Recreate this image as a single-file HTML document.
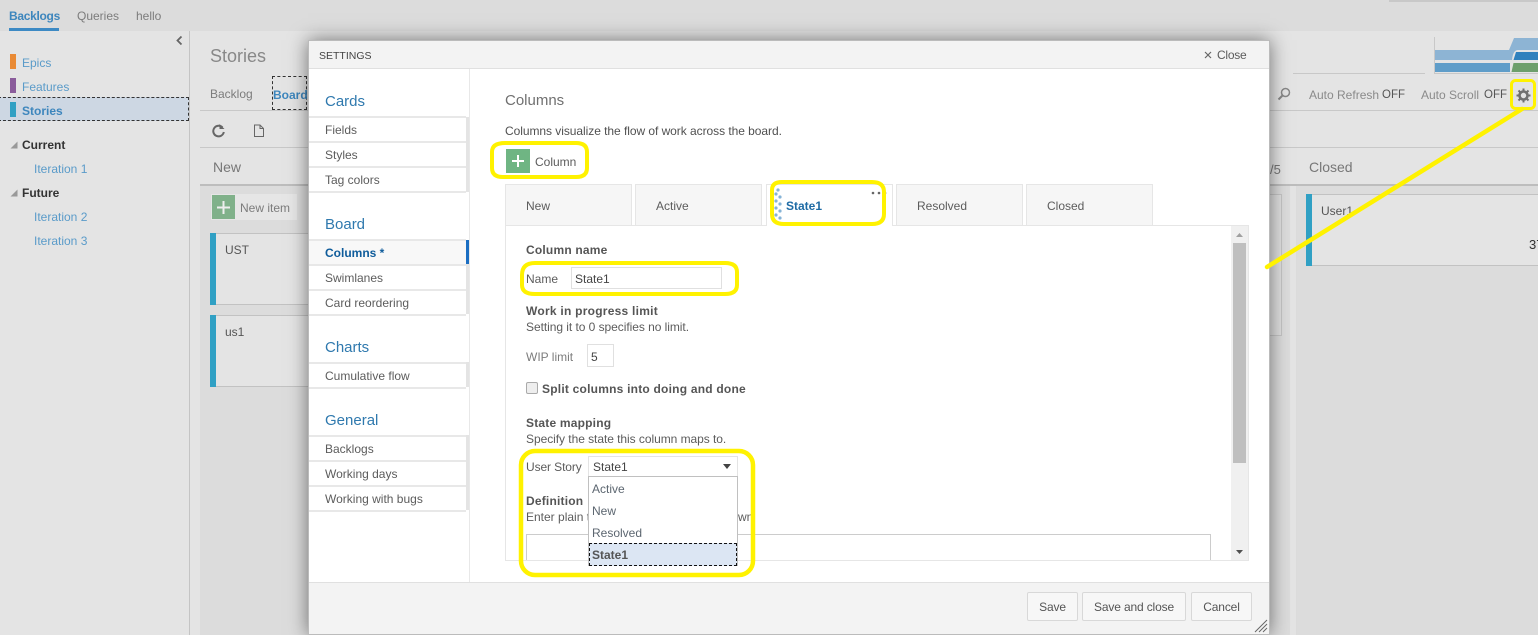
<!DOCTYPE html>
<html><head><meta charset="utf-8"><style>
html,body{margin:0;padding:0;width:1538px;height:635px;overflow:hidden;background:#e4e4e4;font-family:"Liberation Sans",sans-serif;font-size:12px;color:#444}
.a{position:absolute}
.t{position:absolute;white-space:nowrap;line-height:16px}
.bl{color:#5a9bc9}
.ln{position:absolute;background:#e8e8e8;height:2px}
.g{color:#7c7c7c}
.h{font-size:15px;color:#2f79ae;line-height:20px;margin-top:1px}
.sb{color:#5c5c5c;font-size:12px}
.b{font-weight:bold;color:#555;letter-spacing:.2px}
.btn{position:absolute;top:592px;height:29px;background:#f7f7f7;border:1px solid #d8d8d8;border-radius:2px;box-sizing:border-box;text-align:center;line-height:28px;color:#555;letter-spacing:-.15px}
.tab{position:absolute;top:184px;height:42px;background:#f6f6f6;border:1px solid #e6e6e6;border-bottom:none;box-sizing:border-box;line-height:42px;color:#5c5c5c}
</style></head><body>
<!-- background -->
<div class="a" style="left:0;top:0;width:1538px;height:31px;background:#dcdcdc"></div>
<div class="a" style="left:1389px;top:0;width:149px;height:2px;background:#c8c8c8"></div>
<div class="t" style="left:9px;top:8px;font-weight:bold;color:#3d86bd;letter-spacing:-.3px">Backlogs</div>
<div class="a" style="left:9px;top:28px;width:50px;height:3px;background:#3d8ac4"></div>
<div class="t g" style="left:77px;top:8px">Queries</div>
<div class="t g" style="left:136px;top:8px">hello</div>
<div class="a" style="left:189px;top:31px;width:1px;height:604px;background:#c4c4c4"></div>
<svg class="a" style="left:175px;top:35px" width="10" height="12"><path d="M6.500 1.500L2.500 5.500L6.500 9.500" fill="none" stroke="#666" stroke-width="1.800"/></svg>
<div class="a" style="left:10px;top:54px;width:6px;height:15px;background:#e98a35"></div>
<div class="t bl" style="left:22px;top:55px">Epics</div>
<div class="a" style="left:10px;top:78px;width:6px;height:15px;background:#8a5c9b"></div>
<div class="t bl" style="left:22px;top:79px">Features</div>
<div class="a" style="left:-2px;top:97px;width:191px;height:24px;background:#cdd7e3;border:1px dashed #333;box-sizing:border-box"></div>
<div class="a" style="left:10px;top:102px;width:6px;height:15px;background:#30a0c4"></div>
<div class="t" style="left:22px;top:103px;font-weight:bold;color:#3d86bd">Stories</div>
<svg class="a" style="left:10px;top:141px" width="8" height="8"><path d="M7.500 .5V7.500H.5Z" fill="#999"/></svg>
<div class="t" style="left:22px;top:137px;font-weight:bold;color:#333">Current</div>
<div class="t bl" style="left:34px;top:161px">Iteration 1</div>
<svg class="a" style="left:10px;top:189px" width="8" height="8"><path d="M7.500 .5V7.500H.5Z" fill="#999"/></svg>
<div class="t" style="left:22px;top:185px;font-weight:bold;color:#333">Future</div>
<div class="t bl" style="left:34px;top:209px">Iteration 2</div>
<div class="t bl" style="left:34px;top:233px">Iteration 3</div>

<div class="t" style="left:210px;top:46px;font-size:18px;line-height:20px;color:#888">Stories</div>
<div class="t g" style="left:210px;top:86px">Backlog</div>
<div class="a" style="left:272px;top:76px;width:35px;height:34px;border:1px dashed #333;box-sizing:border-box"></div>
<div class="t" style="left:273px;top:87px;font-weight:bold;color:#3d86bd">Board</div>
<div class="a" style="left:200px;top:110px;width:1338px;height:1px;background:#c8c8c8"></div>
<div class="a" style="left:200px;top:147px;width:1338px;height:1px;background:#c8c8c8"></div>
<svg class="a" style="left:211px;top:123px" width="15" height="16"><path d="M11.500 4.500A5.300 5.300 0 1 0 12.800 9" fill="none" stroke="#666" stroke-width="2"/><path d="M8.500 1V6H13.500Z" fill="#666"/></svg>
<svg class="a" style="left:253px;top:124px" width="12" height="14"><path d="M1.500 1H7L10.500 4.500V12.500H1.500ZM7 1V4.500H10.500" fill="none" stroke="#666"/></svg>
<div class="t" style="left:213px;top:159px;font-size:14px;color:#777">New</div>
<div class="a" style="left:200px;top:184px;width:1338px;height:2px;background:#bdbdbd"></div>
<div class="a" style="left:200px;top:186px;width:1090px;height:449px;background:#dcdcdc"></div>
<div class="a" style="left:1290px;top:186px;width:6px;height:449px;background:#e4e4e4"></div>
<div class="a" style="left:1296px;top:186px;width:242px;height:449px;background:#dcdcdc"></div>
<div class="a" style="left:211px;top:194px;width:86px;height:26px;background:#e6e6e6"></div>
<div class="a" style="left:212px;top:195px;width:23px;height:24px;background:#80b18a"></div>
<svg class="a" style="left:217px;top:201px" width="13" height="13"><path d="M6.500 0V13M0 6.500H13" stroke="#eee" stroke-width="2"/></svg>
<div class="t g" style="left:240px;top:200px">New item</div>
<div class="a" style="left:210px;top:233px;width:110px;height:72px;background:#e4e4e4;border-top:1px solid #c2c2c2;border-bottom:1px solid #c2c2c2;box-sizing:border-box"></div>
<div class="a" style="left:210px;top:233px;width:6px;height:72px;background:#30a0c4"></div>
<div class="t" style="left:225px;top:242px;color:#555">UST</div>
<div class="a" style="left:210px;top:315px;width:110px;height:72px;background:#e4e4e4;border-top:1px solid #c2c2c2;border-bottom:1px solid #c2c2c2;box-sizing:border-box"></div>
<div class="a" style="left:210px;top:315px;width:6px;height:72px;background:#30a0c4"></div>
<div class="t" style="left:225px;top:324px;color:#555">us1</div>
<div class="a" style="left:1260px;top:194px;width:22px;height:142px;border:1px solid #c6c6c6;background:#e0e0e0;box-sizing:border-box"></div>
<div class="t" style="left:1270px;top:162px;font-size:13px;color:#777">/5</div>
<div class="a" style="left:1306px;top:194px;width:240px;height:72px;background:#e4e4e4;border-top:1px solid #c2c2c2;border-bottom:1px solid #c2c2c2;box-sizing:border-box"></div>
<div class="a" style="left:1306px;top:194px;width:6px;height:72px;background:#30a0c4"></div>
<div class="t" style="left:1321px;top:203px;color:#555">User1</div>
<div class="t" style="left:1529px;top:237px;color:#333;font-size:13px">37</div>
<div class="t" style="left:1309px;top:159px;font-size:14px;color:#777">Closed</div>
<div class="a" style="left:1293px;top:73px;width:132px;height:1px;background:#c8c8c8"></div>
<!-- chart -->
<svg class="a" style="left:1434px;top:37px" width="104" height="37">
<path d="M1 13H75L80 1H104V13H84Q79 13 78 23H1Z" fill="#8db4d4"/>
<path d="M82 15H104V23H79.500Z" fill="#3081bd"/>
<path d="M1 26H76V35H1Z" fill="#5f9dc9"/>
<path d="M79.500 26H104V35H77.500Z" fill="#6d9f6c"/>
<path d="M.5 0V36.500H104" fill="none" stroke="#c8c8c8"/>
</svg>
<svg class="a" style="left:1277px;top:87px" width="14" height="15"><circle cx="8.500" cy="5.500" r="4" fill="none" stroke="#888" stroke-width="1.500"/><path d="M5.500 8.500L1.500 12.500" stroke="#888" stroke-width="2"/></svg>
<div class="t" style="left:1309px;top:87px;color:#8a8a8a">Auto Refresh</div>
<div class="t" style="left:1382px;top:87px;color:#555;font-size:11.500px">OFF</div>
<div class="t" style="left:1421px;top:87px;color:#8a8a8a">Auto Scroll</div>
<div class="t" style="left:1484px;top:87px;color:#555;font-size:11.500px">OFF</div>
<svg class="a" style="left:1516px;top:88px" width="15" height="15" viewBox="0 0 15 15"><circle cx="7.500" cy="7.500" r="4" fill="none" stroke="#707070" stroke-width="2.600"/><path d="M7.500 .5V3M7.500 12V14.500M.5 7.500H3M12 7.500H14.500M2.500 2.500L4.300 4.300M10.700 10.700L12.500 12.500M12.500 2.500L10.700 4.300M4.300 10.700L2.500 12.500" stroke="#707070" stroke-width="2"/></svg>

<!-- dialog -->
<div class="a" style="left:309px;top:41px;width:960px;height:593px;background:#fff;box-shadow:0 0 18px 1px rgba(0,0,0,.5);outline:1px solid #bbb"></div>
<div class="a" style="left:309px;top:41px;width:960px;height:27px;background:#f3f3f3;border-bottom:1px solid #e0e0e0"></div>
<div class="t" style="left:319px;top:48px;font-size:10.500px;color:#444">SETTINGS</div>
<svg class="a" style="left:1204px;top:51px" width="8" height="8"><path d="M1 1L7 7M7 1L1 7" stroke="#666" stroke-width="1.200"/></svg>
<div class="t" style="left:1217px;top:47px;color:#5c5c5c;letter-spacing:-.25px">Close</div>
<div class="a" style="left:469px;top:69px;width:1px;height:513px;background:#e8e8e8"></div>

<div class="t h" style="left:325px;top:91px">Cards</div>
<div class="ln" style="left:309px;top:116px;width:157px"></div>
<div class="t sb" style="left:325px;top:122px">Fields</div>
<div class="ln" style="left:309px;top:141px;width:157px"></div>
<div class="t sb" style="left:325px;top:147px">Styles</div>
<div class="ln" style="left:309px;top:166px;width:157px"></div>
<div class="t sb" style="left:325px;top:172px">Tag colors</div>
<div class="ln" style="left:309px;top:191px;width:157px"></div>
<div class="a" style="left:466px;top:117px;width:3px;height:75px;background:#e4e4e4"></div>

<div class="t h" style="left:325px;top:214px">Board</div>
<div class="ln" style="left:309px;top:239px;width:157px"></div>
<div class="a" style="left:309px;top:241px;width:157px;height:23px;background:#f8f8f8"></div>
<div class="t" style="left:325px;top:245px;font-weight:bold;color:#0f5c9b">Columns *</div>
<div class="ln" style="left:309px;top:264px;width:157px"></div>
<div class="a" style="left:466px;top:240px;width:3px;height:24px;background:#1b6ec2"></div>
<div class="t sb" style="left:325px;top:270px">Swimlanes</div>
<div class="ln" style="left:309px;top:289px;width:157px"></div>
<div class="t sb" style="left:325px;top:295px">Card reordering</div>
<div class="ln" style="left:309px;top:314px;width:157px"></div>
<div class="a" style="left:466px;top:264px;width:3px;height:50px;background:#e4e4e4"></div>

<div class="t h" style="left:325px;top:337px">Charts</div>
<div class="ln" style="left:309px;top:362px;width:157px"></div>
<div class="t sb" style="left:325px;top:368px">Cumulative flow</div>
<div class="ln" style="left:309px;top:387px;width:157px"></div>
<div class="a" style="left:466px;top:362px;width:3px;height:25px;background:#e4e4e4"></div>

<div class="t h" style="left:325px;top:410px">General</div>
<div class="ln" style="left:309px;top:435px;width:157px"></div>
<div class="t sb" style="left:325px;top:441px">Backlogs</div>
<div class="ln" style="left:309px;top:460px;width:157px"></div>
<div class="t sb" style="left:325px;top:466px">Working days</div>
<div class="ln" style="left:309px;top:485px;width:157px"></div>
<div class="t sb" style="left:325px;top:491px">Working with bugs</div>
<div class="ln" style="left:309px;top:510px;width:157px"></div>
<div class="a" style="left:466px;top:435px;width:3px;height:75px;background:#e4e4e4"></div>

<!-- content -->
<div class="t" style="left:505px;top:91px;font-size:15px;line-height:20px;color:#707070">Columns</div>
<div class="t" style="left:505px;top:123px;color:#505050;letter-spacing:-.05px">Columns visualize the flow of work across the board.</div>
<div class="a" style="left:506px;top:149px;width:24px;height:24px;background:#6fb583"></div>
<svg class="a" style="left:512px;top:155px" width="12" height="12"><path d="M6 0V12M0 6H12" stroke="#fff" stroke-width="2"/></svg>
<div class="t" style="left:535px;top:154px;color:#5c5c5c">Column</div>

<div class="tab" style="left:505px;width:127px;padding-left:20px">New</div>
<div class="tab" style="left:635px;width:127px;padding-left:20px">Active</div>
<div class="tab" style="left:766px;width:127px;padding-left:19px;background:#fff;font-weight:bold;color:#1e6ba5">State1</div>
<div class="tab" style="left:896px;width:127px;padding-left:20px">Resolved</div>
<div class="tab" style="left:1026px;width:127px;padding-left:20px">Closed</div>
<svg class="a" style="left:773px;top:186px" width="10" height="36" fill="#86b3d6"><circle cx="5" cy="4" r="1.600"/><circle cx="3" cy="8" r="1.600"/><circle cx="7" cy="11" r="1.600"/><circle cx="3" cy="15" r="1.600"/><circle cx="7" cy="18" r="1.600"/><circle cx="3" cy="22" r="1.600"/><circle cx="7" cy="25" r="1.600"/><circle cx="3" cy="29" r="1.600"/><circle cx="7" cy="32" r="1.600"/></svg>
<svg class="a" style="left:870px;top:190px" width="18" height="6" fill="#666"><circle cx="3" cy="3" r="1.300"/><circle cx="9" cy="3" r="1.300"/><circle cx="15" cy="3" r="1.300"/></svg>

<div class="a" style="left:505px;top:225px;width:744px;height:336px;border:1px solid #e6e6e6;box-sizing:border-box"></div>
<div class="a" style="left:767px;top:225px;width:125px;height:2px;background:#fff"></div>
<div class="a" style="left:1231px;top:226px;width:17px;height:334px;background:#f0f0f0"></div>
<div class="a" style="left:1233px;top:243px;width:13px;height:220px;background:#bfbfbf"></div>
<svg class="a" style="left:1235px;top:232px" width="9" height="6"><path d="M1 5H8L4.500 1Z" fill="#a0a0a0"/></svg>
<svg class="a" style="left:1235px;top:549px" width="9" height="6"><path d="M1 1H8L4.500 5Z" fill="#505050"/></svg>

<div class="t b" style="left:526px;top:242px">Column name</div>
<div class="t" style="left:526px;top:271px;color:#5c5c5c">Name</div>
<div class="a" style="left:571px;top:267px;width:151px;height:22px;border:1px solid #e0e0e0;box-sizing:border-box"></div>
<div class="t" style="left:575px;top:271px;color:#444">State1</div>
<div class="t b" style="left:526px;top:303px;letter-spacing:.25px">Work in progress limit</div>
<div class="t" style="left:526px;top:319px;color:#5c5c5c;letter-spacing:-.05px">Setting it to 0 specifies no limit.</div>
<div class="t g" style="left:526px;top:349px">WIP limit</div>
<div class="a" style="left:587px;top:344px;width:27px;height:23px;border:1px solid #e0e0e0;box-sizing:border-box"></div>
<div class="t" style="left:591px;top:349px;color:#444">5</div>
<div class="a" style="left:526px;top:382px;width:12px;height:12px;border:1px solid #aaa;border-radius:2px;background:#eee;box-sizing:border-box"></div>
<div class="t b" style="left:542px;top:381px;letter-spacing:.22px">Split columns into doing and done</div>
<div class="t b" style="left:526px;top:415px">State mapping</div>
<div class="t" style="left:526px;top:431px;color:#5c5c5c;letter-spacing:-.05px">Specify the state this column maps to.</div>
<div class="t" style="left:526px;top:459px;color:#5c5c5c;letter-spacing:-.1px">User Story</div>
<div class="a" style="left:588px;top:456px;width:150px;height:21px;border:1px solid #e4e4e4;box-sizing:border-box"></div>
<div class="t" style="left:593px;top:459px;color:#444">State1</div>
<svg class="a" style="left:722px;top:464px" width="10" height="6"><path d="M1 0H9L5 5Z" fill="#444"/></svg>
<div class="t b" style="left:526px;top:493px">Definition</div>
<div class="t" style="left:526px;top:509px;color:#5c5c5c">Enter plain t</div>
<div class="t" style="left:738px;top:509px;color:#5c5c5c">wn</div>
<div class="a" style="left:526px;top:534px;width:685px;height:26px;border:1px solid #ccc;border-bottom:none;box-sizing:border-box"></div>
<!-- dropdown -->
<div class="a" style="left:588px;top:476px;width:150px;height:90px;background:#fff;border:1px solid #c0c0c0;box-sizing:border-box"></div>
<div class="t" style="left:592px;top:481px;color:#5c6670">Active</div>
<div class="t" style="left:592px;top:503px;color:#5c6670">New</div>
<div class="t" style="left:592px;top:525px;color:#5c6670">Resolved</div>
<div class="a" style="left:589px;top:543px;width:148px;height:23px;background:#dce6f3;border:1px dashed #111;box-sizing:border-box"></div>
<div class="t" style="left:592px;top:547px;font-weight:bold;color:#555">State1</div>

<!-- footer -->
<div class="a" style="left:309px;top:582px;width:960px;height:52px;background:#f3f3f3;border-top:1px solid #e0e0e0;box-sizing:border-box"></div>
<div class="btn" style="left:1027px;width:51px">Save</div>
<div class="btn" style="left:1082px;width:104px">Save and close</div>
<div class="btn" style="left:1191px;width:61px">Cancel</div>
<svg class="a" style="left:1254px;top:619px" width="14" height="14"><path d="M1 13L13 1M5 13L13 5M9 13L13 9" stroke="#666" stroke-width="1"/></svg>

<!-- yellow annotations -->
<svg class="a" style="left:0;top:0" width="1538" height="635" fill="none" stroke="#fff200" stroke-width="4">
<path d="M492 152Q492 143 505 143H576Q587 143 587 152V168Q587 177 576 177H503Q492 177 492 168Z"/>
<path d="M772 190Q772 182 782 182H872Q884 182 884 192V214Q884 224 872 224H784Q772 224 772 214Z"/>
<path d="M522 275Q522 263 535 263H725Q737 263 737 272V285Q737 294 725 294H535Q522 294 522 285Z"/>
<rect x="521" y="451" width="232" height="124" rx="14" stroke-width="4.500"/>
<rect x="1511.500" y="80.500" width="23" height="28" rx="4" stroke-width="3"/>
<path d="M1267 267L1522 109" stroke-width="4.500" stroke-linecap="round"/>
</svg>
</body></html>
